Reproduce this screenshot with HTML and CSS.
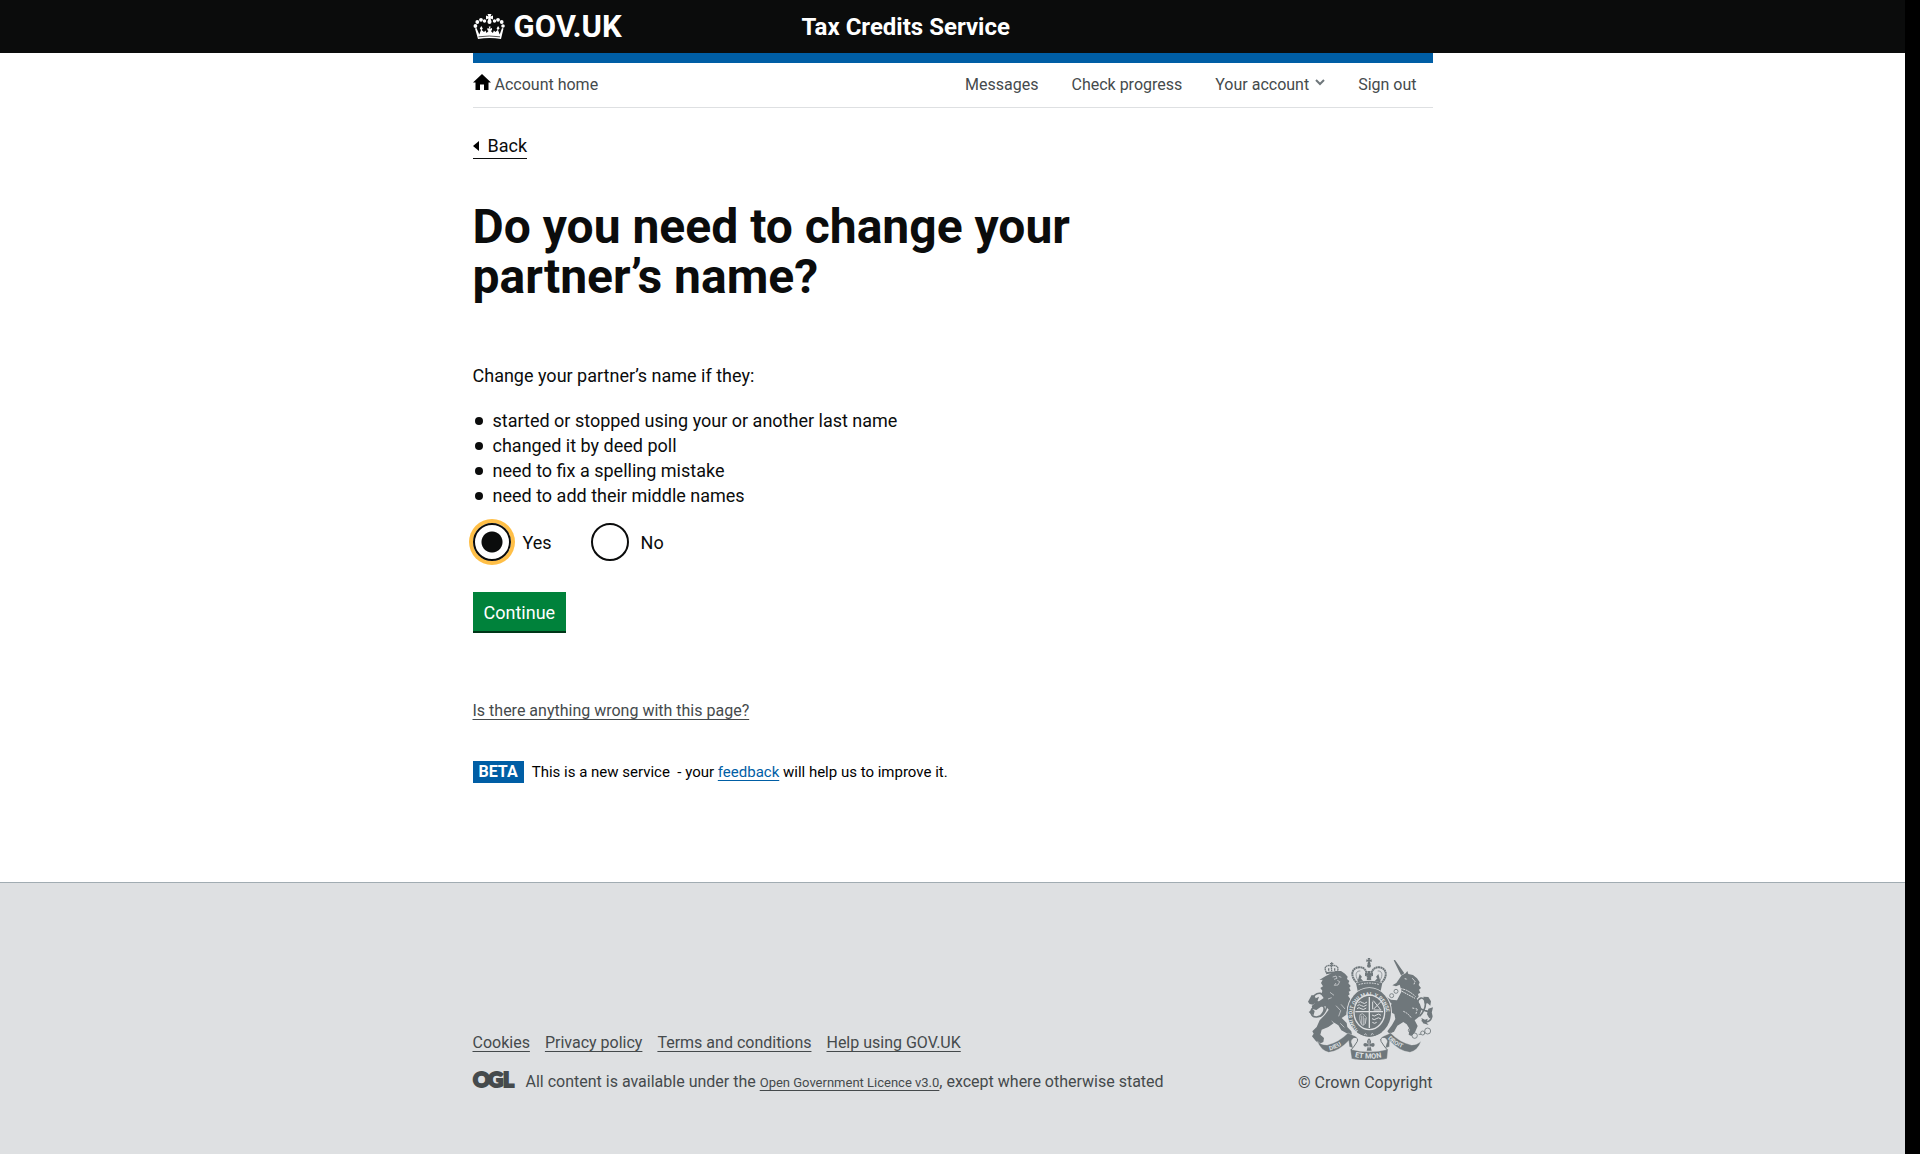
FILE: index.html
```html
<!DOCTYPE html>
<html lang="en">
<head>
<meta charset="utf-8">
<title>Do you need to change your partner’s name? - Tax Credits Service</title>
<link rel="stylesheet" href="styles.css">
</head>
<body>
<header class="site-header">
  <div class="container header-grid">
    <a class="logo" href="#">
      <svg class="crown" viewBox="0 0 31 26" aria-hidden="true">
        <g fill="#fff">
          <path d="M14 0h4l-1 2.500 2.500-1v4l-2.500-1 1 3h-4l1-3-2.500 1v-4l2.500 1z"/>
          <circle cx="16" cy="8" r="2"/>
          <circle cx="11" cy="7" r="1.700"/><circle cx="7.500" cy="5.800" r="1.900"/><circle cx="3.800" cy="8" r="1.900"/><circle cx="1.900" cy="12" r="1.900"/>
          <circle cx="21" cy="7" r="1.700"/><circle cx="24.500" cy="5.800" r="1.900"/><circle cx="28.200" cy="8" r="1.900"/><circle cx="29.500" cy="12" r="1.800"/>
          <path d="M1.500 14.500l1.500-.5 2.800 6.500L7.500 16l-1.200-1.500 1.500-2.500 1.500 2.500L8.200 16l2.300 2 1.500-1.500 1 2.500 2-2-1.200-1 .2-2 2 .8-.8-2.300h2l-.8 2.300 2-.8.2 2-1.200 1 2 2 1-2.500 1.500 1.500 2.300-2-1.100-1.500 1.500-2.500 1.500 2.500L24.500 16l1.700 4.500L28.500 14l1.500.5L27.500 25q-11.500-1.800-23 0z"/>
        </g>
        <path d="M5 22.800q10.800-1.600 21.500 0" fill="none" stroke="#0b0c0c" stroke-width=".7"/>
      </svg>
      <span>GOV.UK</span>
    </a>
    <a class="service-name" href="#">Tax Credits Service</a>
  </div>
</header>

<div class="container">
  <nav class="account-nav" aria-label="Account">
    <a class="home" href="#">
      <svg class="home-icon" viewBox="0 0 18 16" aria-hidden="true"><path d="M9 0l9 8.500h-2.500V16H11v-5.500H7V16H2.500V8.500H0z"/></svg>
      Account home
    </a>
    <ul class="account-links">
      <li><a href="#">Messages</a></li>
      <li><a href="#">Check progress</a></li>
      <li><a href="#">Your account
        <svg class="chevron" viewBox="0 0 10 7" aria-hidden="true"><path d="M1 1l4 4 4-4" fill="none" stroke="#6f777b" stroke-width="2"/></svg></a></li>
      <li><a href="#">Sign out</a></li>
    </ul>
  </nav>

  <main>
    <a class="back" href="#"><svg class="back-icon" viewBox="0 0 6 10" aria-hidden="true"><path d="M0 5l6-5v10z"/></svg>Back</a>
    <h1>Do you need to change your partner’s name?</h1>
    <p class="intro">Change your partner’s name if they:</p>
    <ul class="reasons">
      <li>started or stopped using your or another last name</li>
      <li>changed it by deed poll</li>
      <li>need to fix a spelling mistake</li>
      <li>need to add their middle names</li>
    </ul>
    <form>
      <div class="choices" role="radiogroup" aria-label="Change your partner’s name">
        <label class="choice" for="change-yes"><input type="radio" id="change-yes" name="change" checked>Yes</label>
        <label class="choice" for="change-no"><input type="radio" id="change-no" name="change">No</label>
      </div>
      <button class="continue" type="button">Continue</button>
    </form>
    <p class="report"><a href="#">Is there anything wrong with this page?</a></p>
    <p class="phase"><strong class="tag">BETA</strong><span>This is a new service&nbsp; - your <a href="#">feedback</a> will help us to improve it.</span></p>
  </main>
</div>

<footer class="site-footer">
  <div class="container footer-grid">
    <div>
      <ul class="footer-links">
        <li><a href="#">Cookies</a></li>
        <li><a href="#">Privacy policy</a></li>
        <li><a href="#">Terms and conditions</a></li>
        <li><a href="#">Help using GOV.UK</a></li>
      </ul>
      <div class="licence">
        <svg class="ogl" viewBox="0 0 43 18" aria-hidden="true"><text y="16" x="0 15 30">OGL</text></svg>
        <span>All content is available under the <a href="#">Open Government Licence v3.0</a>, except where otherwise stated</span>
      </div>
    </div>
    <a class="copyright" href="#">
      <svg class="crest" viewBox="84 57 375 306" aria-hidden="true">
        <defs>
          <path id="garter" d="M236 274A51 58 0 1 1 300 274"/>
          <path id="scroll-left" d="M149 334Q179 328 206 300"/>
          <path id="scroll-mid" d="M224 354Q268 364 314 354"/>
          <path id="scroll-right" d="M323 299Q350 326 390 334"/>
        </defs>
        <!-- imperial crown -->
        <g fill="#6f777b">
          <path d="M263 57h8l-2 6 6-2v8l-6-2 3 8h-10l3-8-6 2v-8l6 2z"/>
          <circle cx="267" cy="80" r="6"/>
          <path d="M228 132Q267 118 307 132L302 156Q267 144 233 156z"/>
          <path d="M262 96h10l-2 8 9-3v11l-9-3 4 14h-14l4-14-9 3v-11l9 3zM239 105l7 9-4 4 8 9-18 3zM295 105l-7 9 4 4-8 9 18 3z"/>
        </g>
        <g fill="none" stroke="#6f777b">
          <path d="M229 130C208 108 217 86 237 85C252 84 260 92 264 120M306 130C326 108 317 86 298 85C283 84 274 92 270 120" stroke-width="6" stroke-dasharray="6 1"/>
          <path d="M235 126C222 106 230 94 241 96M299 126C312 106 304 94 293 96" stroke-width="2"/>
        </g>
        <path d="M236 137Q267 127 299 137" fill="none" stroke="#dee0e2" stroke-width="3" stroke-dasharray="5 3"/>
        <!-- lion -->
        <g fill="none" stroke="#6f777b" stroke-width="4">
          <path d="M139 100C131 86 137 77 154 80L155 96M171 100C178 86 172 77 155 80M155 70v10M150 74h10M146 88v8M164 88v8" stroke-dasharray="5 1"/>
          <path d="M138 103q17-5 34 0" stroke-width="6"/>
        </g>
        <path d="M136 112l12-6 18-10 17 0 12 8 8 9-2 7 7 6-3 7 7 8-4 5 4 9-6 3 3 8-5 4 13 18 4 16-8 10-10-12-4 25-14 10 15 15 2 12 12 13 2 10-12-2-20-11-9-15-12-8-18 13-20 8-4 15 11 10-2 12-11 5-11-7-12-15 5-8-4-7 13-13 9-20 16-17 11-15-9-10-14 1-14 10-10-2-4-10 10-8-2-8 14 2 14-10-7-10 3-12-6-8 8-5-6-10 5-10-10 1z" fill="#6f777b"/>
        <path d="M122 230C137 215 136 198 119 198C102 198 90 211 94 224C99 238 119 237 131 223C148 203 139 168 121 163C108 161 99 170 90 187" fill="none" stroke="#6f777b" stroke-width="5"/>
        <path d="M84 188l11-20 9 2 3 8 10-5-5 15-13 9-10-2zM86 219l12-8 6 5-3 12-8-3z" fill="#6f777b"/>
        <path d="M158 114l10-3 3 7-9 3M176 112l8 3M172 124l7 4-5 10-11 1 5-7M150 160l12 9M155 176l-11 4M168 200l14 15-6 17M183 196l12 14M155 246l13 12M181 253l12 12" fill="none" stroke="#dee0e2" stroke-width="2"/>
        <!-- unicorn -->
        <path d="M341 64l4-1 28 40-10 6zM349 132l16-23 12-6 5-7 3 9 14 3 12 10 8 12-3 8 7 9-6 5 4 9-7 4 2 8-6 6 10 17 5 15-8 22-13 11 9 17-8 19-11 11-8-4 3-17-9-14-10-7-18 11-10 18-14 6-6-7 14-19 10-18-3-15-13-6-13 2-11-7 3-7 19 1 7-14-12-10-13-3-4 10-8-4 1-12 16-4 18 11 18 2 14-27-6-20-11 5-11-3z" fill="#6f777b"/>
        <path d="M418 232C446 203 437 175 423 177C410 181 408 201 421 209C434 219 456 213 455 231C454 249 437 252 425 244" fill="none" stroke="#6f777b" stroke-width="5"/>
        <path d="M430 173l15 1 8 13-2 13-8-7-9 1zM445 209l14-4-4 17 2 13-9 3-7-12zM424 237l11 5 8-3-3 12 6 7-17-5z" fill="#6f777b"/>
        <path d="M362 149q21 2 45 24M366 157l39 21M374 119l8 2M397 118l8 9-3 9M397 207l15 3-4 14M370 217q15 6 24 20" fill="none" stroke="#dee0e2" stroke-width="3" stroke-dasharray="6 2"/>
        <g fill="none" stroke="#6f777b" stroke-width="2.500">
          <circle cx="411" cy="211" r="6"/><circle cx="391" cy="274" r="6"/><circle cx="404" cy="290" r="8"/><circle cx="428" cy="282" r="6"/><circle cx="443" cy="276" r="9"/><path d="M416 286h7M435 281h-2M392 280l5 6"/>
          <circle cx="348" cy="157" r="6"/><circle cx="335" cy="170" r="6"/>
        </g>
        <!-- garter and shield -->
        <ellipse cx="268" cy="220" rx="68" ry="75" fill="#dee0e2"/>
        <ellipse cx="268" cy="220" rx="65" ry="73" fill="#6f777b"/>
        <ellipse cx="268" cy="220" rx="48" ry="54" fill="#dee0e2"/>
        <ellipse cx="268" cy="220" rx="44" ry="50" fill="#6f777b"/>
        <g fill="none" stroke="#dee0e2" stroke-width="3">
          <path d="M268 174v93M226 218h83" stroke-width="4"/>
          <path d="M235 191q6-6 12 0t14-2M232 200q6-6 12 0t16-2M231 209q6-6 12 0t16-2M280 185l22 27M304 187l-23 23M278 188v23M281 213h23M276 228q7 6 13 0t14 1M276 239q7 6 13 0t14 1M277 250q7 6 13 0"/>
          <path d="M240 227l7-3 6 4 6 8-3 17-7 7-7-8-3-13z M245 230v27M250 230v28M255 237v17" stroke-width="2"/>
        </g>
        <text class="garter-text"><textPath href="#garter">HONI SOIT QUI MAL Y PENSE</textPath></text>
        <path d="M231 279Q268 307 306 279l-4-6Q268 295 235 272z" fill="#6f777b"/>
        <path d="M252 288l5-4 3 5M281 287l-5-4-3 6" fill="none" stroke="#dee0e2" stroke-width="2"/>
        <!-- motto scroll -->
        <g fill="#6f777b" stroke="#dee0e2" stroke-width="1">
          <path d="M112 307Q124 319 142 318Q176 310 204 282L229 293Q208 301 216 315L219 327L208 323L206 305Q176 337 146 340Q122 334 112 307z"/>
          <path d="M423 307Q411 319 394 318Q359 310 332 282L307 293Q328 301 319 315L316 327L328 323L329 305Q359 337 390 340Q414 334 423 307z"/>
          <path d="M211 331Q268 346 324 331L321 359Q268 371 215 359z"/>
        </g>
        <path d="M204 296Q239 290 232 307Q223 322 213 333M331 296Q296 290 303 307Q312 322 322 333" fill="none" stroke="#6f777b" stroke-width="3"/>
        <path d="M267 298q10 9 4 17q13-8 13 3q-1 8-12 5l3 12h-15l3-12q-12 2-13-5q1-11 14-3q-7-8 3-17z" fill="#6f777b"/>
        <path d="M267 303v25M258 323h19" stroke="#dee0e2" stroke-width="2"/>
        <g class="scroll-text">
          <text><textPath href="#scroll-left">DIEU</textPath></text>
          <text class="mon"><textPath href="#scroll-mid">ET MON</textPath></text>
          <text><textPath href="#scroll-right">DROIT</textPath></text>
        </g>
      </svg>
      <span>© Crown Copyright</span>
    </a>
  </div>
</footer>
</body>
</html>
```
FILE: styles.css
```css
* {
  box-sizing: border-box;
}

html {
  min-height: 100%;
  background: #000;
}

body {
  display: flex;
  flex-direction: column;
  min-height: 100vh;
  margin: 0 15px 0 0;
  background: #fff;
  color: #0b0c0c;
  font-family: Roboto, "Liberation Sans", sans-serif;
  font-size: 18px;
  line-height: 25px;
}

ul {
  margin: 0;
  padding: 0;
  list-style: none;
}

p {
  margin: 0;
}

.container {
  width: 100%;
  max-width: 960px;
  margin: 0 auto;
}

.site-header {
  padding: 8px 0;
  background: #0b0c0c;
}

.header-grid {
  display: grid;
  grid-template-columns: 329px 1fr;
  align-items: center;
}

.logo,
.service-name {
  color: #fff;
  font-weight: 700;
  text-decoration: none;
}

.logo {
  display: flex;
  align-items: center;
  gap: 9px;
  font-size: 31px;
  line-height: 37px;
}

.crown {
  width: 32px;
  height: 26px;
}

.service-name {
  padding-top: 2px;
  font-size: 24px;
}

.account-nav {
  display: flex;
  align-items: center;
  justify-content: space-between;
  height: 55px;
  padding: 0 16px 2px 0;
  border-top: 10px solid #005ea5;
  border-bottom: 1px solid #dee0e2;
  font-size: 16px;
}

.account-nav a {
  color: #454a4c;
  text-decoration: none;
}

.home {
  display: flex;
  align-items: center;
  gap: 4px;
}

.home-icon {
  width: 18px;
  height: 16px;
  margin-bottom: 4px;
}

.account-links {
  display: flex;
  gap: 33px;
}

.chevron {
  width: 10px;
  height: 7px;
  margin: 0 0 4px 2px;
}

main {
  padding-bottom: 99px;
}

.back {
  display: flex;
  align-items: center;
  gap: 9px;
  width: fit-content;
  margin-top: 25px;
  border-bottom: 1px solid #0b0c0c;
  color: #0b0c0c;
  text-decoration: none;
}

.back-icon {
  width: 6px;
  height: 10px;
}

h1 {
  max-width: 640px;
  margin: 43px 0 61px;
  font-size: 48px;
  line-height: 50px;
}

.reasons {
  margin-top: 20px;
}

.reasons li {
  display: flex;
  align-items: center;
}

.reasons li::before {
  content: "";
  width: 8px;
  height: 8px;
  margin: 1px 10px 0 2px;
  border-radius: 50%;
  background: #0b0c0c;
}

.choices {
  display: flex;
  gap: 39px;
  margin-top: 15px;
}

.choice {
  display: flex;
  align-items: center;
  gap: 12px;
}

.choice input {
  appearance: none;
  width: 38px;
  height: 38px;
  margin: 0;
  border: 2px solid #0b0c0c;
  border-radius: 50%;
  background: #fff;
}

.choice input:checked {
  background: radial-gradient(circle, #0b0c0c 10px, #fff 11px);
  box-shadow: 0 0 0 4px #ffbf47;
}

.continue {
  margin-top: 31px;
  padding: 8px 11px 6px;
  border: 0;
  background: #00823b;
  box-shadow: 0 2px 0 #003618;
  color: #fff;
  font: inherit;
}

.report {
  margin-top: 67px;
  font-size: 16px;
}

.report a,
.footer-links a,
.licence a {
  color: #454a4c;
  text-underline-offset: 3px;
}

.phase {
  display: flex;
  align-items: center;
  gap: 8px;
  margin-top: 38px;
  color: #000;
  font-size: 15px;
  line-height: 22px;
}

.phase a {
  color: #005ea5;
  text-underline-offset: 3px;
}

.tag {
  padding: 0 6px;
  background: #005ea5;
  color: #fff;
  font-size: 16px;
}

.site-footer {
  flex: 1;
  padding: 75px 0 50px;
  border-top: 1px solid #a1acb2;
  background: #dee0e2;
  color: #454a4c;
  font-size: 16px;
}

.footer-grid {
  display: flex;
  align-items: flex-end;
  justify-content: space-between;
}

.footer-links {
  display: flex;
  gap: 15px;
}

.licence {
  display: flex;
  align-items: center;
  gap: 10px;
  margin-top: 14px;
}

.licence a {
  font-size: 13px;
}

.ogl {
  width: 43px;
  height: 18px;
  margin-bottom: 4px;
  overflow: visible;
}

.ogl text {
  fill: #454a4c;
  stroke: #454a4c;
  stroke-width: 2;
  font: 900 21px Lato, sans-serif;
}

.copyright {
  display: flex;
  flex-direction: column;
  align-items: flex-end;
  gap: 10px;
  color: #454a4c;
  text-decoration: none;
}

.crest {
  width: 125px;
  height: 102px;
}

.garter-text,
.scroll-text {
  fill: #dee0e2;
  font: 700 16px Roboto, sans-serif;
}

.scroll-text {
  font-size: 18px;
}

.scroll-text .mon {
  font-size: 22px;
}
```
